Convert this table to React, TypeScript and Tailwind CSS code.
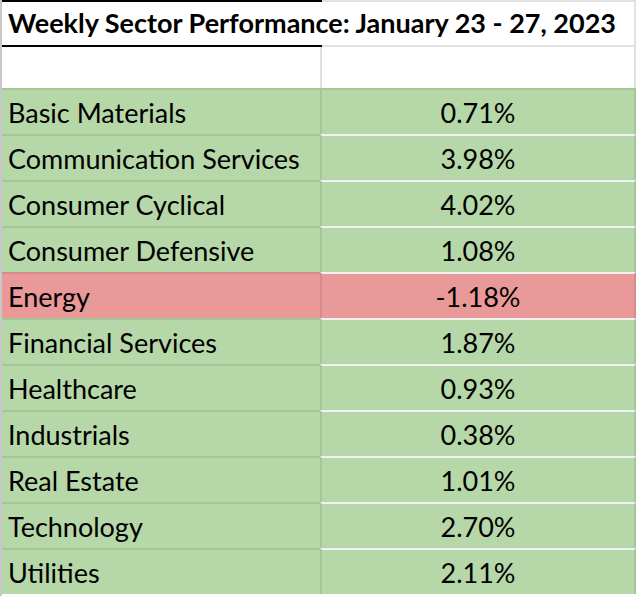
const rows = [
  { name: "Basic Materials", value: "0.71%" },
  { name: "Communication Services", value: "3.98%" },
  { name: "Consumer Cyclical", value: "4.02%" },
  { name: "Consumer Defensive", value: "1.08%" },
  { name: "Energy", value: "-1.18%", negative: true },
  { name: "Financial Services", value: "1.87%" },
  { name: "Healthcare", value: "0.93%" },
  { name: "Industrials", value: "0.38%" },
  { name: "Real Estate", value: "1.01%" },
  { name: "Technology", value: "2.70%" },
  { name: "Utilities", value: "2.11%" },
];

export default function App() {
  return (
    <div
      className="w-[636px] h-[596px] bg-white border-l-2 border-[#c8c8c8] overflow-hidden text-black"
      style={{ fontFamily: "Lato, 'Open Sans', sans-serif" }}
    >
      {/* title row */}
      <div className="flex h-[47px]">
        <div className="w-[320px] shrink-0 border-t-2 border-b-2 border-black flex items-center pl-[6px] overflow-visible">
          <span className="whitespace-nowrap text-[27px] font-bold relative z-10">
            Weekly Sector Performance: January 23 - 27, 2023
          </span>
        </div>
        <div className="flex-1 border-t-2 border-b-2 border-r-2 border-[#e2e2e2]" />
      </div>

      {/* empty row */}
      <div className="flex h-[41px]">
        <div className="w-[318px] shrink-0" />
        <div className="flex-1 border-l-2 border-r-2 border-[#e0e0e0]" />
      </div>

      {rows.map((r, i) => (
        <div
          key={r.name}
          className={
            "flex h-[46px] text-[27px] " +
            (r.negative ? "bg-[#ea9999]" : "bg-[#b6d7a8]")
          }
        >
          <div
            className={
              "w-[318px] shrink-0 flex items-center pl-[6px] pt-[2px] border-t-2 whitespace-nowrap " +
              (r.negative ? "border-[#d98a8a]" : "border-[#a6c698]")
            }
          >
            {r.name}
          </div>
          <div
            className={
              "flex-1 flex items-center justify-center pt-[2px] border-l-2 border-r-2 border-t-2 " +
              (r.negative ? "border-l-[#d48c8c] border-r-[#d48c8c]" : "border-l-[#a6c698] border-r-[#a6c698]") +
              (i === 0 ? " border-t-[#a6c698]" : " border-t-[#f2f2f2]")
            }
          >
            {r.value}
          </div>
        </div>
      ))}
    </div>
  );
}
